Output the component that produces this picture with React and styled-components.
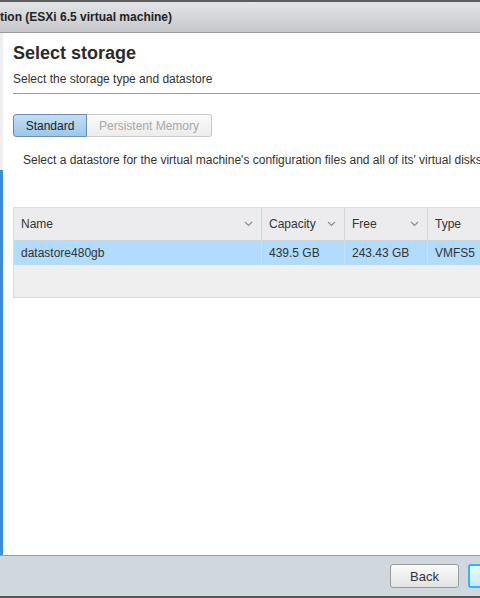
import React from "react";
import styled, { createGlobalStyle } from "styled-components";

const Global = createGlobalStyle`
  html, body { margin: 0; padding: 0; background: #fff; }
  body { font-family: "Liberation Sans", Arial, sans-serif; }
  * { box-sizing: border-box; }
`;

const Viewport = styled.div`
  width: 480px;
  height: 598px;
  overflow: hidden;
  position: relative;
`;

const Dialog = styled.div`
  width: 703px;
  height: 598px;
  display: flex;
  flex-direction: column;
  font-family: "Liberation Sans", Arial, sans-serif;
  color: #333;
`;

const TopStrip = styled.div`
  height: 2px;
  background: #5c5c5c;
  flex: none;
`;

const TitleBar = styled.div`
  height: 31px;
  flex: none;
  display: flex;
  align-items: center;
  background: linear-gradient(#e3e4e7, #c6c7ca);
  border-bottom: 1px solid #9a9a9a;
  font-size: 12px;
  font-weight: bold;
  color: #222;
  white-space: nowrap;
`;

const Main = styled.div`
  flex: 1;
  display: flex;
  min-height: 0;
`;

const Rail = styled.div`
  width: 3px;
  flex: none;
  display: flex;
  flex-direction: column;
`;

const RailItem = styled.div`
  height: ${(p) => (p.$active ? "auto" : "137px")};
  flex: ${(p) => (p.$active ? 1 : "none")};
  background: ${(p) => (p.$active ? "#3b8dd5" : "#efefef")};
`;

const Content = styled.div`
  flex: 1;
  padding: 9px 0 0 10px;
  display: flex;
  flex-direction: column;
`;

const Heading = styled.h1`
  margin: 0;
  font-size: 18px;
  line-height: 22px;
  font-weight: bold;
  color: #2b2b2b;
`;

const Sub = styled.div`
  margin-top: 8px;
  font-size: 12px;
  line-height: 14px;
  color: #333;
`;

const Rule = styled.div`
  margin-top: 7px;
  height: 1px;
  background: #999;
`;

const Segmented = styled.div`
  margin-top: 20px;
  display: flex;
  height: 23px;
`;

const SegButton = styled.div`
  height: 23px;
  display: flex;
  align-items: center;
  justify-content: center;
  font-size: 12px;
  width: ${(p) => p.$w}px;
  ${(p) =>
    p.$active
      ? `
    background: linear-gradient(#c4ddf5, #9cc6ee);
    border: 1px solid #6a8db5;
    border-radius: 3px 0 0 3px;
    color: #222;
  `
      : `
    background: linear-gradient(#fbfbfb, #ececec);
    border: 1px solid #c9c9c9;
    border-left: none;
    border-radius: 0 3px 3px 0;
    color: #a8a8a8;
  `}
`;

const Para = styled.div`
  margin-top: 16px;
  padding-left: 10px;
  font-size: 12px;
  line-height: 14px;
  white-space: nowrap;
  color: #333;
`;

const Table = styled.div`
  margin-top: 40px;
  border: 1px solid #dcdcdc;
  border-right: none;
  background: #efefef;
`;

const Row = styled.div`
  display: grid;
  grid-template-columns: 247px 83px 83px 1fr;
  height: ${(p) => (p.$head ? "32px" : "25px")};
  background: ${(p) => (p.$selected ? "#b2dcfd" : "#ececee")};
  ${(p) => (p.$selected ? "border-top: 1px solid #cfd6dc;" : "")}
`;

const Cell = styled.div`
  display: flex;
  align-items: center;
  justify-content: space-between;
  padding: 0 8px 0 7px;
  font-size: 12px;
  color: #333;
  white-space: nowrap;
  border-left: ${(p) => (p.$first ? "none" : `1px solid ${p.$selected ? "#c8e3f8" : "#d6d6d6"}`)};
`;

const Empty = styled.div`
  height: 32px;
  background: #efefef;
`;

const Footer = styled.div`
  flex: none;
  height: 43px;
  background: #d1d7de;
  border-top: 1px solid #9a9a9a;
  border-bottom: 2px solid #555;
  display: flex;
  align-items: center;
  justify-content: flex-end;
  gap: 9px;
  padding-right: 10px;
`;

const Button = styled.div`
  width: 69px;
  height: 24px;
  display: flex;
  align-items: center;
  justify-content: center;
  font-size: 13px;
  border-radius: 3px;
  color: #333;
  ${(p) =>
    p.$primary
      ? `
    border: 2px solid #33b6ef;
    background: linear-gradient(#eef8fe, #c9e8fb);
  `
      : `
    border: 1px solid #9c9c9c;
    background: linear-gradient(#fbfbfb, #e2e2e2);
  `}
`;

const Chevron = () => (
  <svg width="9" height="6" viewBox="0 0 9 6">
    <polyline points="1,1 4.5,4.5 8,1" fill="none" stroke="#8a8a8a" strokeWidth="1.1" />
  </svg>
);

const columns = [
  { name: "Name", sort: true },
  { name: "Capacity", sort: true },
  { name: "Free", sort: true },
  { name: "Type", sort: false },
];

const rows = [["datastore480gb", "439.5 GB", "243.43 GB", "VMFS5"]];

export default function App() {
  return (
    <>
      <Global />
      <Viewport>
        <Dialog>
          <TopStrip />
          <TitleBar>tion (ESXi 6.5 virtual machine)</TitleBar>
          <Main>
            <Rail>
              <RailItem />
              <RailItem $active />
            </Rail>
            <Content>
              <Heading>Select storage</Heading>
              <Sub>Select the storage type and datastore</Sub>
              <Rule />
              <Segmented>
                <SegButton $active $w={74}>Standard</SegButton>
                <SegButton $w={125}>Persistent Memory</SegButton>
              </Segmented>
              <Para>
                Select a datastore for the virtual machine's configuration files and all of its' virtual disks.
              </Para>
              <Table>
                <Row $head>
                  {columns.map((c, i) => (
                    <Cell key={c.name} $first={i === 0}>
                      <span>{c.name}</span>
                      {c.sort && <Chevron />}
                    </Cell>
                  ))}
                </Row>
                {rows.map((r) => (
                  <Row key={r[0]} $selected>
                    {r.map((v, i) => (
                      <Cell key={i} $first={i === 0} $selected>
                        <span>{v}</span>
                      </Cell>
                    ))}
                  </Row>
                ))}
                <Empty />
              </Table>
            </Content>
          </Main>
          <Footer>
            <Button>Back</Button>
            <Button $primary>Next</Button>
            <Button>Finish</Button>
            <Button>Cancel</Button>
          </Footer>
        </Dialog>
      </Viewport>
    </>
  );
}
